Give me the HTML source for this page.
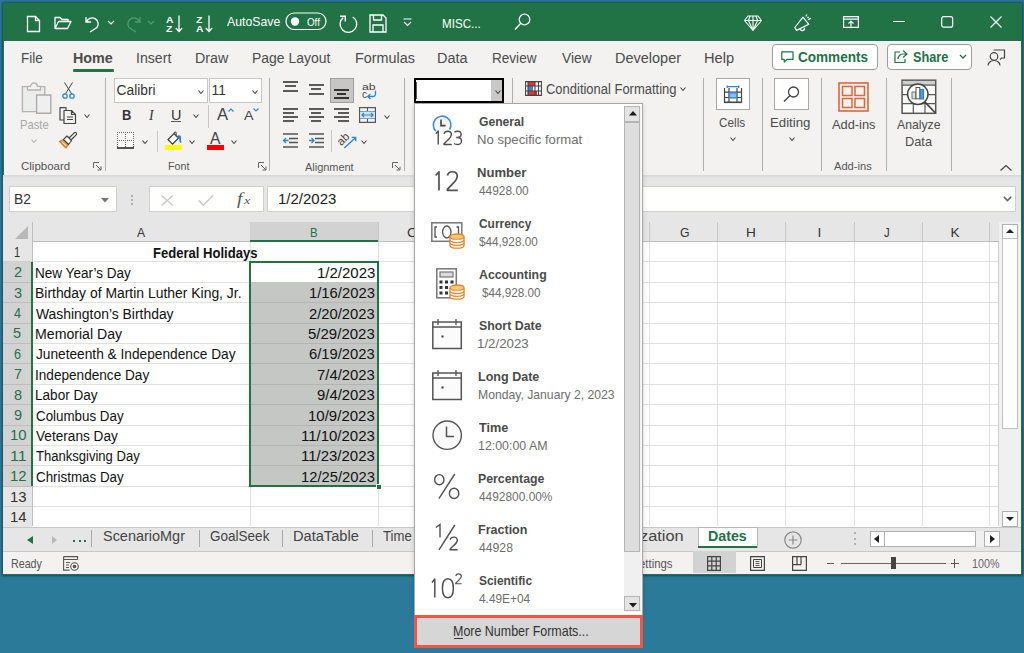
<!DOCTYPE html><html><head><meta charset="utf-8"><style>
html,body{margin:0;padding:0;width:1024px;height:653px;overflow:hidden;background:#2c7a99;}
.t{position:absolute;white-space:nowrap;line-height:1;transform-origin:0 0;}
svg{overflow:visible}
</style></head><body>
<div style="position:absolute;left:3px;top:3px;width:1018.5px;height:571.5px;background:#217346;box-shadow:0 0 2px 1px rgba(18,55,75,0.75)"></div>
<div style="position:absolute;left:3px;top:3px;width:1018px;height:38px;background:#217346;"></div>
<div style="position:absolute;left:4px;top:41px;width:1016.5px;height:134px;background:#f3f2f1;"></div>
<div style="position:absolute;left:4px;top:41px;width:1016.5px;height:1px;background:#fdfdfd;"></div>
<div style="position:absolute;left:4px;top:41px;width:1px;height:134px;background:#fdfdfd;"></div>
<div style="position:absolute;left:3px;top:175px;width:1017.5px;height:47px;background:#e6e6e6;"></div>
<div style="position:absolute;left:3px;top:175px;width:1017.5px;height:3px;background:linear-gradient(#d6d6d6,#e6e6e6);"></div>
<svg style="position:absolute;left:26px;top:15px;" width="15" height="18" viewBox="0 0 15 18"><path d="M1.5 1.5h8l4 4v11h-12z M9.5 1.5v4h4" fill="none" stroke="#fff" stroke-width="1.3"/></svg>
<svg style="position:absolute;left:54px;top:16px;" width="18" height="14" viewBox="0 0 18 14"><path d="M1 12.5V1.5h5l2 2h6v2.5 M1 12.5l3.5-7h12.5l-3.5 7z" fill="none" stroke="#fff" stroke-width="1.3" stroke-linejoin="round"/></svg>
<svg style="position:absolute;left:84px;top:15px;" width="17" height="18" viewBox="0 0 17 18"><path d="M2 2v5h5 M2.5 7 A6 6 0 1 1 13 12.5 L6 17" fill="none" stroke="#fff" stroke-width="1.3"/></svg>
<svg style="position:absolute;left:107px;top:20px;" width="8" height="5" viewBox="0 0 8 5"><path d="M1 1l3 3l3-3" fill="none" stroke="#fff" stroke-width="1.2"/></svg>
<svg style="position:absolute;left:126px;top:15px;" width="16" height="18" viewBox="0 0 16 18"><path d="M14 2v5h-5 M13.5 7 A6 6 0 1 0 3 12.5 L10 17" fill="none" stroke="#4f9a6f" stroke-width="1.3"/></svg>
<svg style="position:absolute;left:147px;top:20px;" width="8" height="5" viewBox="0 0 8 5"><path d="M1 1l3 3l3-3" fill="none" stroke="#4f9a6f" stroke-width="1.2"/></svg>
<div class="t" style="left:165.70px;top:16px;font-size:8.99px;font-weight:bold;font-style:normal;font-family:'Liberation Sans',sans-serif;color:#ffffff;transform:scaleX(1.1500);">A</div>
<div class="t" style="left:165.70px;top:25px;font-size:8.99px;font-weight:bold;font-style:normal;font-family:'Liberation Sans',sans-serif;color:#ffffff;transform:scaleX(1.1500);">Z</div>
<svg style="position:absolute;left:175px;top:15px;" width="8" height="18" viewBox="0 0 8 18"><path d="M4 0.5v16 M0.8 13l3.2 3.5l3.2-3.5" fill="none" stroke="#fff" stroke-width="1.3"/></svg>
<div class="t" style="left:195.80px;top:16px;font-size:8.99px;font-weight:bold;font-style:normal;font-family:'Liberation Sans',sans-serif;color:#ffffff;transform:scaleX(1.1500);">Z</div>
<div class="t" style="left:195.80px;top:25px;font-size:8.99px;font-weight:bold;font-style:normal;font-family:'Liberation Sans',sans-serif;color:#ffffff;transform:scaleX(1.1500);">A</div>
<svg style="position:absolute;left:205px;top:15px;" width="8" height="18" viewBox="0 0 8 18"><path d="M4 0.5v16 M0.8 13l3.2 3.5l3.2-3.5" fill="none" stroke="#fff" stroke-width="1.3"/></svg>
<div class="t" style="left:226.60px;top:17px;font-size:11.88px;font-weight:normal;font-style:normal;font-family:'Liberation Sans',sans-serif;color:#ffffff;transform:scaleX(1.0333);">AutoSave</div>
<svg style="position:absolute;left:285px;top:12px;" width="42" height="18" viewBox="0 0 42 18"><rect x="1" y="1" width="40" height="16.5" rx="8.25" fill="none" stroke="#fff" stroke-width="1.2"/><circle cx="10" cy="9.5" r="4.2" fill="#fff"/></svg>
<div class="t" style="left:306.70px;top:18px;font-size:10.29px;font-weight:normal;font-style:normal;font-family:'Liberation Sans',sans-serif;color:#ffffff;transform:scaleX(0.9500);">Off</div>
<svg style="position:absolute;left:335px;top:10px;" width="27" height="27" viewBox="0 0 27 27"><path d="M17.8 7A8.3 8.3 0 1 1 8.2 7.6 M5 6.2H10.3V11.6" fill="none" stroke="#fff" stroke-width="1.4"/></svg>
<svg style="position:absolute;left:369px;top:14px;" width="18" height="19" viewBox="0 0 18 19"><path d="M1 1h13l3 3v14h-16z M4.5 1v5h8v-5 M4 18v-7h10v7" fill="none" stroke="#fff" stroke-width="1.3"/></svg>
<svg style="position:absolute;left:403px;top:18px;" width="9" height="9" viewBox="0 0 9 9"><path d="M0.5 1h8 M1 4l3.5 3.5l3.5-3.5" fill="none" stroke="#fff" stroke-width="1.2"/></svg>
<div class="t" style="left:442.10px;top:18px;font-size:12.90px;font-weight:normal;font-style:normal;font-family:'Liberation Sans',sans-serif;color:#ffffff;transform:scaleX(0.9024);">MISC...</div>
<svg style="position:absolute;left:514px;top:13px;" width="17" height="18" viewBox="0 0 17 18"><circle cx="10.5" cy="6.5" r="5.3" fill="none" stroke="#fff" stroke-width="1.3"/><path d="M6.8 10.3L1 16.5" stroke="#fff" stroke-width="1.4"/></svg>
<svg style="position:absolute;left:744px;top:15px;" width="18" height="16" viewBox="0 0 18 16"><path d="M4 1h10l3.5 4.5l-8.5 10l-8.5-10z M0.5 5.5h17 M6 1l-1.5 4.5l4.5 10l4.5-10l-1.5-4.5 M9 1v14.5" fill="none" stroke="#fff" stroke-width="1.1" stroke-linejoin="round"/></svg>
<svg style="position:absolute;left:794px;top:14px;" width="18" height="18" viewBox="0 0 18 18"><path d="M0.8 13.5L9 3.2L14.8 10.3L2.6 16.4Z M6.2 15.2a2.3 2.3 0 0 0 4.3 -1.6 M11.8 2.6L12.9 0.4 M14.3 5.6L16.8 4.3 M13.4 4l1.2-1.2" fill="none" stroke="#fff" stroke-width="1.2" stroke-linejoin="round"/></svg>
<svg style="position:absolute;left:843px;top:16px;" width="16" height="12" viewBox="0 0 16 12"><path d="M0.6 0.6h14.8v10.8h-14.8z M0.6 3.2h14.8 M8 10.5v-5 M5.5 7.5l2.5-2.5l2.5 2.5" fill="none" stroke="#fff" stroke-width="1.2"/></svg>
<div style="position:absolute;left:893px;top:21px;width:12px;height:1.3000000000000007px;background:#fff;"></div>
<svg style="position:absolute;left:941px;top:16px;" width="13" height="12" viewBox="0 0 13 12"><rect x="0.7" y="0.7" width="11" height="10.5" rx="2" fill="none" stroke="#fff" stroke-width="1.2"/></svg>
<svg style="position:absolute;left:990px;top:16px;" width="12" height="12" viewBox="0 0 12 12"><path d="M0.5 0.5l11 11 M11.5 0.5l-11 11" stroke="#fff" stroke-width="1.2"/></svg>
<div class="t" style="left:20.77px;top:51px;font-size:14.49px;font-weight:normal;font-style:normal;font-family:'Liberation Sans',sans-serif;color:#4c4c4c;transform:scaleX(0.9318);">File</div>
<div class="t" style="left:73.01px;top:51px;font-size:14.49px;font-weight:bold;font-style:normal;font-family:'Liberation Sans',sans-serif;color:#4c4c4c;transform:scaleX(0.9872);">Home</div>
<div class="t" style="left:135.53px;top:51px;font-size:14.49px;font-weight:normal;font-style:normal;font-family:'Liberation Sans',sans-serif;color:#4c4c4c;transform:scaleX(0.9750);">Insert</div>
<div class="t" style="left:195.02px;top:51px;font-size:14.49px;font-weight:normal;font-style:normal;font-family:'Liberation Sans',sans-serif;color:#4c4c4c;transform:scaleX(0.9848);">Draw</div>
<div class="t" style="left:252.44px;top:51px;font-size:14.49px;font-weight:normal;font-style:normal;font-family:'Liberation Sans',sans-serif;color:#4c4c4c;transform:scaleX(0.9642);">Page Layout</div>
<div class="t" style="left:355.01px;top:51px;font-size:14.49px;font-weight:normal;font-style:normal;font-family:'Liberation Sans',sans-serif;color:#4c4c4c;transform:scaleX(0.9915);">Formulas</div>
<div class="t" style="left:437.00px;top:51px;font-size:14.49px;font-weight:normal;font-style:normal;font-family:'Liberation Sans',sans-serif;color:#4c4c4c;">Data</div>
<div class="t" style="left:492.06px;top:51px;font-size:14.49px;font-weight:normal;font-style:normal;font-family:'Liberation Sans',sans-serif;color:#4c4c4c;transform:scaleX(0.9362);">Review</div>
<div class="t" style="left:561.50px;top:51px;font-size:14.49px;font-weight:normal;font-style:normal;font-family:'Liberation Sans',sans-serif;color:#4c4c4c;transform:scaleX(0.9531);">View</div>
<div class="t" style="left:615.00px;top:51px;font-size:14.49px;font-weight:normal;font-style:normal;font-family:'Liberation Sans',sans-serif;color:#4c4c4c;">Developer</div>
<div class="t" style="left:703.99px;top:51px;font-size:14.49px;font-weight:normal;font-style:normal;font-family:'Liberation Sans',sans-serif;color:#4c4c4c;transform:scaleX(1.0103);">Help</div>
<div style="position:absolute;left:73px;top:69px;width:41px;height:3px;background:#217346;border-radius:1px"></div>
<div style="position:absolute;left:772px;top:44px;width:106px;height:26px;background:#fff;border:1px solid #9c9c9c;border-radius:4px;box-sizing:border-box"></div>
<svg style="position:absolute;left:780.5px;top:50.5px;" width="13" height="12" viewBox="0 0 13 12"><path d="M0.8 0.8h11.2v7.6h-6l-2.8 2.8v-2.8h-2.4z" fill="none" stroke="#217346" stroke-width="1.2" stroke-linejoin="round"/></svg>
<div class="t" style="left:797.80px;top:49px;font-size:15.07px;font-weight:bold;font-style:normal;font-family:'Liberation Sans',sans-serif;color:#217346;transform:scaleX(0.9000);">Comments</div>
<div style="position:absolute;left:887px;top:44px;width:85px;height:26px;background:#fff;border:1px solid #9c9c9c;border-radius:4px;box-sizing:border-box"></div>
<svg style="position:absolute;left:894px;top:49px;" width="14" height="15" viewBox="0 0 14 15"><path d="M9 1.5l4 3.5l-4 3.5 M13 5h-4a5 5 0 0 0-5 5 M6 3H1v10.5h10V10" fill="none" stroke="#217346" stroke-width="1.2" stroke-linejoin="round"/></svg>
<div class="t" style="left:912.50px;top:49px;font-size:15.07px;font-weight:bold;font-style:normal;font-family:'Liberation Sans',sans-serif;color:#217346;transform:scaleX(0.8452);">Share</div>
<svg style="position:absolute;left:959px;top:54px;" width="8" height="5" viewBox="0 0 8 5"><path d="M1 1l3 3l3-3" fill="none" stroke="#217346" stroke-width="1.3"/></svg>
<svg style="position:absolute;left:987px;top:49px;" width="18" height="17" viewBox="0 0 18 17"><circle cx="7" cy="7.5" r="3.8" fill="none" stroke="#444" stroke-width="1.2"/><path d="M1 16.5a6 5 0 0 1 12 0 M6.5 1h11v8h-3l-1.5 1.7" fill="none" stroke="#444" stroke-width="1.2"/></svg>
<svg style="position:absolute;left:16px;top:76px;" width="40" height="40" viewBox="0 0 40 40"><path d="M6.4 10.6h22.4v25h-22.4z" fill="#ececec" stroke="#b4b4b4" stroke-width="1.4"/><path d="M11.5 10.3v3.7h13v-3.7h-3.2a3.3 3.3 0 0 0 -6.6 0z" fill="#f2f2f2" stroke="#b4b4b4" stroke-width="1.3" stroke-linejoin="round"/><path d="M20.6 19h14.2v18.3h-14.2z" fill="#efefef" stroke="#acacac" stroke-width="1.4"/></svg>
<div class="t" style="left:19.54px;top:118px;font-size:13.04px;font-weight:normal;font-style:normal;font-family:'Liberation Sans',sans-serif;color:#a8a8a8;transform:scaleX(0.8625);">Paste</div>
<svg style="position:absolute;left:31px;top:139px;" width="6" height="4" viewBox="0 0 6 4"><path d="M0.5 0.5l2.5 3l2.5 -3" fill="none" stroke="#b0b0b0" stroke-width="1.1"/></svg>
<svg style="position:absolute;left:62px;top:82px;" width="13" height="17" viewBox="0 0 13 17"><path d="M2.5 0.5l7.5 12 M10.5 0.5l-7.5 12" stroke="#444" stroke-width="1"/><circle cx="3" cy="14" r="2.2" fill="none" stroke="#2b88d8" stroke-width="1.3"/><circle cx="10" cy="14" r="2.2" fill="none" stroke="#2b88d8" stroke-width="1.3"/></svg>
<svg style="position:absolute;left:59px;top:107px;" width="18" height="17" viewBox="0 0 18 17"><path d="M7 3.5V0.7H1v12.3h4 M5 3.5h7.5l4 4v9h-11.5z M12.5 3.5v4h4 M8 10h6 M8 12.5h6" fill="none" stroke="#444" stroke-width="1.2" stroke-linejoin="round"/></svg>
<svg style="position:absolute;left:84px;top:114px;" width="6" height="4" viewBox="0 0 6 4"><path d="M0.5 0.5l2.5 3l2.5 -3" fill="none" stroke="#444" stroke-width="1.1"/></svg>
<svg style="position:absolute;left:58px;top:131px;" width="20" height="18" viewBox="0 0 20 18"><path d="M5.5 8.5L1.5 10.5L8 17L10.5 13.5z" fill="#f5a54e" stroke="#e07a1f" stroke-width="1.2" stroke-linejoin="round"/><path d="M4.5 11.5l3.5 3" stroke="#fff" stroke-width="1"/><path d="M5.5 8.5L9 5L13.5 9.5L10.5 13.5z" fill="#fff" stroke="#444" stroke-width="1.2" stroke-linejoin="round"/><path d="M11 7L16.2 1.8a1.4 1.4 0 0 1 2 2L13 9" fill="none" stroke="#444" stroke-width="1.2"/></svg>
<div class="t" style="left:21.00px;top:161px;font-size:11.16px;font-weight:normal;font-style:normal;font-family:'Liberation Sans',sans-serif;color:#555555;transform:scaleX(1.0298);">Clipboard</div>
<svg style="position:absolute;left:93px;top:162px;" width="9" height="9" viewBox="0 0 9 9"><path d="M0.5 6V0.5h5.5 M3 3l5 5 M4.5 8h3.5v-3.5" fill="none" stroke="#666" stroke-width="1"/></svg>
<div style="position:absolute;left:105px;top:78px;width:1px;height:93px;background:#b1afad;"></div>
<div style="position:absolute;left:114px;top:78px;width:94px;height:25px;background:#fff;border:1px solid #c8c6c4;box-sizing:border-box"></div>
<div class="t" style="left:116.60px;top:84px;font-size:13.77px;font-weight:normal;font-style:normal;font-family:'Liberation Sans',sans-serif;color:#333;">Calibri</div>
<svg style="position:absolute;left:198px;top:90px;" width="6" height="4" viewBox="0 0 6 4"><path d="M0.5 0.5l2.5 3l2.5 -3" fill="none" stroke="#444" stroke-width="1.1"/></svg>
<div style="position:absolute;left:209px;top:78px;width:53px;height:25px;background:#fff;border:1px solid #c8c6c4;box-sizing:border-box"></div>
<div class="t" style="left:211.60px;top:84px;font-size:13.77px;font-weight:normal;font-style:normal;font-family:'Liberation Sans',sans-serif;color:#333;">11</div>
<svg style="position:absolute;left:252px;top:90px;" width="6" height="4" viewBox="0 0 6 4"><path d="M0.5 0.5l2.5 3l2.5 -3" fill="none" stroke="#444" stroke-width="1.1"/></svg>
<div class="t" style="left:121.53px;top:108px;font-size:14.93px;font-weight:bold;font-style:normal;font-family:'Liberation Sans',sans-serif;color:#333;transform:scaleX(0.8667);">B</div>
<div class="t" style="left:148.50px;top:108px;font-size:14.93px;font-weight:normal;font-style:italic;font-family:'Liberation Serif',serif;color:#333;transform:scaleX(0.9167);">I</div>
<div class="t" style="left:170.83px;top:108px;font-size:14.93px;font-weight:normal;font-style:normal;font-family:'Liberation Sans',sans-serif;color:#333;transform:scaleX(0.9667);">U</div>
<div style="position:absolute;left:171.4px;top:121px;width:9.599999999999994px;height:1.2000000000000028px;background:#555;"></div>
<svg style="position:absolute;left:193px;top:114px;" width="6" height="4" viewBox="0 0 6 4"><path d="M0.5 0.5l2.5 3l2.5 -3" fill="none" stroke="#444" stroke-width="1.1"/></svg>
<div style="position:absolute;left:208px;top:105px;width:1px;height:23px;background:#c8c6c4;"></div>
<div class="t" style="left:217.00px;top:107px;font-size:15.65px;font-weight:normal;font-style:normal;font-family:'Liberation Sans',sans-serif;color:#444;transform:scaleX(1.0636);">A</div>
<svg style="position:absolute;left:228px;top:108px;" width="6" height="4" viewBox="0 0 6 4"><path d="M0.5 3.5l2.5-2.5l2.5 2.5" fill="none" stroke="#2b88d8" stroke-width="1.2"/></svg>
<div class="t" style="left:244.00px;top:110px;font-size:12.32px;font-weight:normal;font-style:normal;font-family:'Liberation Sans',sans-serif;color:#444;transform:scaleX(1.1625);">A</div>
<svg style="position:absolute;left:253px;top:108px;" width="6" height="4" viewBox="0 0 6 4"><path d="M0.5 0.5l2.5 2.5l2.5-2.5" fill="none" stroke="#2b88d8" stroke-width="1.2"/></svg>
<svg style="position:absolute;left:117px;top:132px;" width="17" height="17" viewBox="0 0 17 17"><rect x="0.5" y="0.5" width="16" height="16" fill="#fbfbfb"/><path d="M0.5 0V15 M16.5 0V15 M0 0.5H17 M8.5 0V15 M0 8.5H17" fill="none" stroke="#6a6a6a" stroke-width="1" stroke-dasharray="1 1"/><rect x="0" y="15" width="17" height="2" fill="#555"/></svg>
<svg style="position:absolute;left:142px;top:140px;" width="6" height="4" viewBox="0 0 6 4"><path d="M0.5 0.5l2.5 3l2.5 -3" fill="none" stroke="#444" stroke-width="1.1"/></svg>
<div style="position:absolute;left:157px;top:131px;width:1px;height:21px;background:#c8c6c4;"></div>
<svg style="position:absolute;left:166px;top:131px;" width="17" height="14" viewBox="0 0 17 14"><path d="M2 8.6L8 2.6L12.5 7.1L6.5 13.1Z" fill="#fff" stroke="#333" stroke-width="1.3" stroke-linejoin="round"/><path d="M8 2.6Q8.6 0.6 10 1.4L10.4 5.6" fill="none" stroke="#555" stroke-width="1.2"/><path d="M11.8 6.3Q12.8 4.3 13.9 5.4L14.4 11" fill="none" stroke="#2b78c8" stroke-width="1.7" stroke-linecap="round"/></svg>
<div style="position:absolute;left:165px;top:145px;width:17px;height:4.5px;background:#ffff00;"></div>
<svg style="position:absolute;left:189px;top:140px;" width="6" height="4" viewBox="0 0 6 4"><path d="M0.5 0.5l2.5 3l2.5 -3" fill="none" stroke="#444" stroke-width="1.1"/></svg>
<div class="t" style="left:210.00px;top:131px;font-size:16.52px;font-weight:normal;font-style:normal;font-family:'Liberation Sans',sans-serif;color:#444;transform:scaleX(0.9455);">A</div>
<div style="position:absolute;left:206.7px;top:145px;width:17.100000000000023px;height:4.5px;background:#ff0000;"></div>
<svg style="position:absolute;left:231px;top:140px;" width="6" height="4" viewBox="0 0 6 4"><path d="M0.5 0.5l2.5 3l2.5 -3" fill="none" stroke="#444" stroke-width="1.1"/></svg>
<div class="t" style="left:168.01px;top:161px;font-size:10.87px;font-weight:normal;font-style:normal;font-family:'Liberation Sans',sans-serif;color:#555555;transform:scaleX(0.9857);">Font</div>
<svg style="position:absolute;left:258px;top:162px;" width="9" height="9" viewBox="0 0 9 9"><path d="M0.5 6V0.5h5.5 M3 3l5 5 M4.5 8h3.5v-3.5" fill="none" stroke="#666" stroke-width="1"/></svg>
<div style="position:absolute;left:269px;top:78px;width:1px;height:93px;background:#b1afad;"></div>
<div style="position:absolute;left:283px;top:81px;width:15px;height:1.5px;background:#5a5a5a;"></div>
<div style="position:absolute;left:285.3px;top:85px;width:10.699999999999989px;height:1.5px;background:#5a5a5a;"></div>
<div style="position:absolute;left:283px;top:90px;width:15px;height:1.5px;background:#5a5a5a;"></div>
<div style="position:absolute;left:308.6px;top:84px;width:15.199999999999989px;height:1.5px;background:#5a5a5a;"></div>
<div style="position:absolute;left:310.8px;top:88px;width:10.699999999999989px;height:1.5px;background:#5a5a5a;"></div>
<div style="position:absolute;left:308.6px;top:93px;width:15.199999999999989px;height:1.5px;background:#5a5a5a;"></div>
<div style="position:absolute;left:330px;top:78px;width:24px;height:25px;background:#c8c6c4;border:1px solid #a19f9d;box-sizing:border-box"></div>
<div style="position:absolute;left:334px;top:89px;width:15px;height:1.5px;background:#333;"></div>
<div style="position:absolute;left:337px;top:93px;width:9px;height:1.5px;background:#333;"></div>
<div style="position:absolute;left:334px;top:97px;width:15px;height:1.5px;background:#333;"></div>
<div class="t" style="left:362.00px;top:82px;font-size:9.42px;font-weight:normal;font-style:normal;font-family:'Liberation Sans',sans-serif;color:#444;transform:scaleX(1.3000);">ab</div>
<div class="t" style="left:362.00px;top:90px;font-size:10.14px;font-weight:normal;font-style:normal;font-family:'Liberation Sans',sans-serif;color:#444;">c</div>
<svg style="position:absolute;left:367px;top:90px;" width="10" height="9" viewBox="0 0 10 9"><path d="M8.5 0.5v3.5a2.5 2.5 0 0 1-2.5 2.5h-5 M3.5 4l-2.8 2.5l2.8 2.5" fill="none" stroke="#2b88d8" stroke-width="1.3"/></svg>
<div style="position:absolute;left:283px;top:108px;width:15px;height:1.5px;background:#5a5a5a;"></div>
<div style="position:absolute;left:283px;top:112px;width:11px;height:1.5px;background:#5a5a5a;"></div>
<div style="position:absolute;left:283px;top:116px;width:15px;height:1.5px;background:#5a5a5a;"></div>
<div style="position:absolute;left:283px;top:120px;width:11px;height:1.5px;background:#5a5a5a;"></div>
<div style="position:absolute;left:308.6px;top:108px;width:15.199999999999989px;height:1.5px;background:#5a5a5a;"></div>
<div style="position:absolute;left:310.8px;top:112px;width:10.699999999999989px;height:1.5px;background:#5a5a5a;"></div>
<div style="position:absolute;left:308.6px;top:116px;width:15.199999999999989px;height:1.5px;background:#5a5a5a;"></div>
<div style="position:absolute;left:310.8px;top:120px;width:10.699999999999989px;height:1.5px;background:#5a5a5a;"></div>
<div style="position:absolute;left:334px;top:108px;width:15px;height:1.5px;background:#5a5a5a;"></div>
<div style="position:absolute;left:338px;top:112px;width:11px;height:1.5px;background:#5a5a5a;"></div>
<div style="position:absolute;left:334px;top:116px;width:15px;height:1.5px;background:#5a5a5a;"></div>
<div style="position:absolute;left:338px;top:120px;width:11px;height:1.5px;background:#5a5a5a;"></div>
<svg style="position:absolute;left:359px;top:107px;" width="17" height="16" viewBox="0 0 17 16"><rect x="0.6" y="0.6" width="15.8" height="14.8" fill="none" stroke="#555" stroke-width="1.2"/><path d="M0.6 4.5h15.8 M0.6 11.5h15.8 M8.5 0.6v3.9 M8.5 11.5v3.9" stroke="#555" stroke-width="1.1"/><rect x="1.2" y="4.5" width="14.6" height="7" fill="#cde6f7"/><path d="M3 8h11 M5 6l-2 2l2 2 M12 6l2 2l-2 2" fill="none" stroke="#2b88d8" stroke-width="1.2"/></svg>
<svg style="position:absolute;left:384px;top:115px;" width="6" height="4" viewBox="0 0 6 4"><path d="M0.5 0.5l2.5 3l2.5 -3" fill="none" stroke="#444" stroke-width="1.1"/></svg>
<svg style="position:absolute;left:283px;top:133px;" width="16" height="15" viewBox="0 0 16 15"><path d="M0 1h15 M6 5.5h9 M6 9.5h9 M0 14h15" stroke="#555" stroke-width="1.4"/><path d="M0.5 7.5h5 M3 5l-2.5 2.5l2.5 2.5" fill="none" stroke="#2b88d8" stroke-width="1.3"/></svg>
<svg style="position:absolute;left:308.6px;top:133px;" width="16" height="15" viewBox="0 0 16 15"><path d="M0 1h15 M6 5.5h9 M6 9.5h9 M0 14h15" stroke="#555" stroke-width="1.4"/><path d="M0 7.5h5 M2.5 5l2.5 2.5l-2.5 2.5" fill="none" stroke="#2b88d8" stroke-width="1.3"/></svg>
<div style="position:absolute;left:331px;top:130px;width:1px;height:22px;background:#c8c6c4;"></div>
<svg style="position:absolute;left:334px;top:128px;" width="30" height="24" viewBox="0 0 30 24"><text x="0" y="0" font-family="Liberation Sans" font-size="11.5" fill="#444" transform="translate(7.2,18.2) rotate(-45)">ab</text><path d="M10.3 19.9L21.7 9.4 M17.6 9.4H21.7V13.2" fill="none" stroke="#2b88d8" stroke-width="1.4"/></svg>
<svg style="position:absolute;left:361px;top:140px;" width="6" height="4" viewBox="0 0 6 4"><path d="M0.5 0.5l2.5 3l2.5 -3" fill="none" stroke="#444" stroke-width="1.1"/></svg>
<div class="t" style="left:304.50px;top:162px;font-size:11.16px;font-weight:normal;font-style:normal;font-family:'Liberation Sans',sans-serif;color:#555555;transform:scaleX(0.9800);">Alignment</div>
<svg style="position:absolute;left:392px;top:162px;" width="9" height="9" viewBox="0 0 9 9"><path d="M0.5 6V0.5h5.5 M3 3l5 5 M4.5 8h3.5v-3.5" fill="none" stroke="#666" stroke-width="1"/></svg>
<div style="position:absolute;left:404px;top:78px;width:1px;height:93px;background:#b1afad;"></div>
<div style="position:absolute;left:413.6px;top:78.2px;width:90.69999999999999px;height:24.599999999999994px;background:#fff;border:2px solid #000;box-sizing:border-box"></div>
<div style="position:absolute;left:490.5px;top:80.2px;width:11.800000000000011px;height:20.599999999999994px;background:#c8c8c8;"></div>
<svg style="position:absolute;left:494.5px;top:89.5px;" width="6" height="4" viewBox="0 0 6 4"><path d="M0.5 0.5l2.5 3l2.5 -3" fill="none" stroke="#444" stroke-width="1.1"/></svg>
<div style="position:absolute;left:416px;top:82px;width:1.3000000000000114px;height:16.5px;background:#555;"></div>
<div style="position:absolute;left:512px;top:78px;width:1px;height:93px;background:#b1afad;"></div>
<svg style="position:absolute;left:525px;top:81px;" width="17" height="15" viewBox="0 0 17 15"><rect x="0.6" y="0.6" width="15.8" height="13.8" fill="#fff"/><rect x="3" y="0.6" width="7" height="4.4" fill="#e8322b"/><rect x="3" y="10" width="9" height="4.4" fill="#e8322b"/><rect x="3" y="5" width="5" height="5" fill="#2b88d8"/><path d="M0.6 0.6h15.8v13.8h-15.8z M3 0.6v13.8 M10 0.6v13.8 M13.5 0.6v13.8 M0.6 5h15.8 M0.6 10h15.8" fill="none" stroke="#444" stroke-width="1.1"/></svg>
<div class="t" style="left:545.60px;top:82px;font-size:14.93px;font-weight:normal;font-style:normal;font-family:'Liberation Sans',sans-serif;color:#4c4c4c;transform:scaleX(0.8691);">Conditional Formatting</div>
<svg style="position:absolute;left:680px;top:87px;" width="6" height="4" viewBox="0 0 6 4"><path d="M0.5 0.5l2.5 3l2.5 -3" fill="none" stroke="#444" stroke-width="1.1"/></svg>
<div style="position:absolute;left:703px;top:78px;width:1px;height:93px;background:#b1afad;"></div>
<div style="position:absolute;left:716px;top:78.2px;width:34px;height:32.3px;background:#fff;border:1px solid #a8a8a8;box-sizing:border-box"></div>
<svg style="position:absolute;left:723px;top:84px;" width="20" height="20" viewBox="0 0 20 20"><path d="M1.5 4V18.5 M6 4V18.5 M14 4V18.5 M18.5 4V18.5 M1.5 8.2H18.5 M1.5 13.5H18.5" stroke="#444" stroke-width="1.2"/><path d="M1 18.3H19" stroke="#444" stroke-width="1.6"/><rect x="5.8" y="8" width="8.4" height="6.6" fill="#3b8edb"/><rect x="7.2" y="9.6" width="5.6" height="3.4" fill="#8fc0ec"/><path d="M4.2 2.7H15.7 M4.2 1.4V4 M15.7 1.4V4" stroke="#2b88d8" stroke-width="1.3"/></svg>
<div class="t" style="left:719.00px;top:117px;font-size:12.90px;font-weight:normal;font-style:normal;font-family:'Liberation Sans',sans-serif;color:#4c4c4c;transform:scaleX(0.9138);">Cells</div>
<svg style="position:absolute;left:729.5px;top:137px;" width="6" height="4" viewBox="0 0 6 4"><path d="M0.5 0.5l2.5 3l2.5 -3" fill="none" stroke="#444" stroke-width="1.1"/></svg>
<div style="position:absolute;left:762px;top:78px;width:1px;height:93px;background:#b1afad;"></div>
<div style="position:absolute;left:774px;top:78.2px;width:34.5px;height:32.3px;background:#fff;border:1px solid #a8a8a8;box-sizing:border-box"></div>
<svg style="position:absolute;left:783px;top:86px;" width="17" height="17" viewBox="0 0 17 17"><circle cx="10.5" cy="6" r="5" fill="none" stroke="#444" stroke-width="1.3"/><path d="M7 9.5l-6 6" stroke="#444" stroke-width="1.4"/></svg>
<div class="t" style="left:770.27px;top:117px;font-size:12.90px;font-weight:normal;font-style:normal;font-family:'Liberation Sans',sans-serif;color:#4c4c4c;transform:scaleX(1.0263);">Editing</div>
<svg style="position:absolute;left:789px;top:137px;" width="6" height="4" viewBox="0 0 6 4"><path d="M0.5 0.5l2.5 3l2.5 -3" fill="none" stroke="#444" stroke-width="1.1"/></svg>
<div style="position:absolute;left:821px;top:78px;width:1px;height:93px;background:#b1afad;"></div>
<svg style="position:absolute;left:838px;top:82px;" width="31" height="30" viewBox="0 0 31 30"><rect x="1" y="1" width="29" height="28" fill="none" stroke="#e0653a" stroke-width="1.6"/><rect x="4.5" y="4.5" width="9.5" height="9" fill="none" stroke="#e0653a" stroke-width="1.5"/><rect x="17" y="4.5" width="9.5" height="9" fill="none" stroke="#e0653a" stroke-width="1.5"/><rect x="4.5" y="16.5" width="9.5" height="9" fill="none" stroke="#e0653a" stroke-width="1.5"/><rect x="17" y="16.5" width="9.5" height="9" fill="none" stroke="#e0653a" stroke-width="1.5"/></svg>
<div class="t" style="left:832.00px;top:118px;font-size:13.62px;font-weight:normal;font-style:normal;font-family:'Liberation Sans',sans-serif;color:#4c4c4c;transform:scaleX(0.9435);">Add-ins</div>
<div class="t" style="left:834.30px;top:161px;font-size:11.45px;font-weight:normal;font-style:normal;font-family:'Liberation Sans',sans-serif;color:#555555;transform:scaleX(0.9718);">Add-ins</div>
<div style="position:absolute;left:886px;top:78px;width:1px;height:93px;background:#b1afad;"></div>
<svg style="position:absolute;left:901px;top:79px;" width="37" height="36" viewBox="0 0 37 36"><rect x="1.1" y="1.2" width="33.6" height="33.1" fill="#fff" stroke="#555" stroke-width="1.5"/><rect x="1.8" y="1.9" width="32.2" height="4.3" fill="#cfcfcf"/><path d="M1.1 6.2H34.7 M1.1 15.7H34.7 M1.1 24.7H34.7 M12.3 24.7V34.3 M24 24.7V34.3" stroke="#5a5a5a" stroke-width="1.2"/><circle cx="16.8" cy="15.3" r="10.2" fill="#fff" stroke="#444" stroke-width="1.5"/><path d="M23.8 22.8L34.5 34" stroke="#444" stroke-width="1.8"/><rect x="11" y="13" width="3.8" height="6.8" fill="#ddd" stroke="#777" stroke-width="1"/><rect x="15" y="8.5" width="3.8" height="11.3" fill="#fff" stroke="#555" stroke-width="1"/><rect x="19.1" y="10.4" width="3.5" height="9.6" fill="#4a9ae0" stroke="#2b78c8" stroke-width="1"/></svg>
<div class="t" style="left:897.30px;top:119px;font-size:12.46px;font-weight:normal;font-style:normal;font-family:'Liberation Sans',sans-serif;color:#4c4c4c;transform:scaleX(0.9818);">Analyze</div>
<div class="t" style="left:904.96px;top:136px;font-size:12.32px;font-weight:normal;font-style:normal;font-family:'Liberation Sans',sans-serif;color:#4c4c4c;transform:scaleX(1.0400);">Data</div>
<div style="position:absolute;left:951px;top:78px;width:1px;height:93px;background:#b1afad;"></div>
<svg style="position:absolute;left:1000px;top:165px;" width="12" height="6" viewBox="0 0 12 6"><path d="M0.5 5.5l5.5-5l5.5 5" fill="none" stroke="#444" stroke-width="1.2"/></svg>
<div style="position:absolute;left:9px;top:186px;width:108px;height:25.5px;background:#fffffe;border:1px solid #d0d0d0;box-sizing:border-box"></div>
<div class="t" style="left:13.59px;top:191px;font-size:15.22px;font-weight:normal;font-style:normal;font-family:'Liberation Sans',sans-serif;color:#333;transform:scaleX(0.9118);">B2</div>
<svg style="position:absolute;left:101px;top:198px;" width="8" height="5" viewBox="0 0 8 5"><path d="M0 0h8l-4 4.5z" fill="#777"/></svg>
<div style="position:absolute;left:131px;top:194.5px;width:2px;height:2.0px;background:#b0b0b0;"></div>
<div style="position:absolute;left:131px;top:198.5px;width:2px;height:2.0px;background:#b0b0b0;"></div>
<div style="position:absolute;left:131px;top:202.5px;width:2px;height:2.0px;background:#b0b0b0;"></div>
<div style="position:absolute;left:148.5px;top:186px;width:115.5px;height:25.5px;background:#fffffe;border:1px solid #d0d0d0;box-sizing:border-box"></div>
<svg style="position:absolute;left:161px;top:194.5px;" width="13" height="11" viewBox="0 0 13 11"><path d="M0.5 0.5l11.5 10 M12 0.5l-11.5 10" stroke="#c8c8c8" stroke-width="1.3"/></svg>
<svg style="position:absolute;left:198px;top:195px;" width="16" height="11" viewBox="0 0 16 11"><path d="M0.8 5.5l4.5 4.5l9.8-9.5" fill="none" stroke="#c8c8c8" stroke-width="1.5"/></svg>
<div class="t" style="left:236.50px;top:191px;font-size:15.94px;font-weight:normal;font-style:italic;font-family:'Liberation Serif',serif;color:#555;transform:scaleX(1.2143);">f</div>
<div class="t" style="left:243.50px;top:196px;font-size:10.14px;font-weight:normal;font-style:italic;font-family:'Liberation Serif',serif;color:#555;transform:scaleX(1.4000);">x</div>
<div style="position:absolute;left:266.5px;top:186px;width:749.0px;height:25.5px;background:#fffffe;border:1px solid #d0d0d0;box-sizing:border-box"></div>
<div class="t" style="left:278.02px;top:191px;font-size:15.36px;font-weight:normal;font-style:normal;font-family:'Liberation Sans',sans-serif;color:#222;transform:scaleX(0.9759);">1/2/2023</div>
<svg style="position:absolute;left:1002.5px;top:196px;" width="9" height="6" viewBox="0 0 9 6"><path d="M0.8 0.8l3.7 3.7l3.7-3.7" fill="none" stroke="#666" stroke-width="1.6"/></svg>
<div style="position:absolute;left:3px;top:222px;width:1017.5px;height:305px;background:#fff;"></div>
<div style="position:absolute;left:3px;top:222px;width:1017.5px;height:19.5px;background:#e6e6e6;"></div>
<div style="position:absolute;left:3px;top:222px;width:29px;height:305px;background:#e6e6e6;"></div>
<svg style="position:absolute;left:15px;top:226px;" width="14" height="13" viewBox="0 0 14 13"><path d="M13 0v13h-13z" fill="#b8b8b8"/></svg>
<div style="position:absolute;left:32px;top:261.34999999999997px;width:966.5px;height:1.0px;background:#e1e1e1;"></div>
<div style="position:absolute;left:3px;top:261.34999999999997px;width:29px;height:1.0px;background:#cfcfcf;"></div>
<div style="position:absolute;left:32px;top:281.75px;width:966.5px;height:1.0px;background:#e1e1e1;"></div>
<div style="position:absolute;left:3px;top:281.75px;width:29px;height:1.0px;background:#cfcfcf;"></div>
<div style="position:absolute;left:32px;top:302.15px;width:966.5px;height:1.0px;background:#e1e1e1;"></div>
<div style="position:absolute;left:3px;top:302.15px;width:29px;height:1.0px;background:#cfcfcf;"></div>
<div style="position:absolute;left:32px;top:322.54999999999995px;width:966.5px;height:1.0px;background:#e1e1e1;"></div>
<div style="position:absolute;left:3px;top:322.54999999999995px;width:29px;height:1.0px;background:#cfcfcf;"></div>
<div style="position:absolute;left:32px;top:342.95px;width:966.5px;height:1.0px;background:#e1e1e1;"></div>
<div style="position:absolute;left:3px;top:342.95px;width:29px;height:1.0px;background:#cfcfcf;"></div>
<div style="position:absolute;left:32px;top:363.34999999999997px;width:966.5px;height:1.0px;background:#e1e1e1;"></div>
<div style="position:absolute;left:3px;top:363.34999999999997px;width:29px;height:1.0px;background:#cfcfcf;"></div>
<div style="position:absolute;left:32px;top:383.75px;width:966.5px;height:1.0px;background:#e1e1e1;"></div>
<div style="position:absolute;left:3px;top:383.75px;width:29px;height:1.0px;background:#cfcfcf;"></div>
<div style="position:absolute;left:32px;top:404.15px;width:966.5px;height:1.0px;background:#e1e1e1;"></div>
<div style="position:absolute;left:3px;top:404.15px;width:29px;height:1.0px;background:#cfcfcf;"></div>
<div style="position:absolute;left:32px;top:424.54999999999995px;width:966.5px;height:1.0px;background:#e1e1e1;"></div>
<div style="position:absolute;left:3px;top:424.54999999999995px;width:29px;height:1.0px;background:#cfcfcf;"></div>
<div style="position:absolute;left:32px;top:444.95px;width:966.5px;height:1.0px;background:#e1e1e1;"></div>
<div style="position:absolute;left:3px;top:444.95px;width:29px;height:1.0px;background:#cfcfcf;"></div>
<div style="position:absolute;left:32px;top:465.34999999999997px;width:966.5px;height:1.0px;background:#e1e1e1;"></div>
<div style="position:absolute;left:3px;top:465.34999999999997px;width:29px;height:1.0px;background:#cfcfcf;"></div>
<div style="position:absolute;left:32px;top:485.75px;width:966.5px;height:1.0px;background:#e1e1e1;"></div>
<div style="position:absolute;left:3px;top:485.75px;width:29px;height:1.0px;background:#cfcfcf;"></div>
<div style="position:absolute;left:32px;top:506.15px;width:966.5px;height:1.0px;background:#e1e1e1;"></div>
<div style="position:absolute;left:3px;top:506.15px;width:29px;height:1.0px;background:#cfcfcf;"></div>
<div style="position:absolute;left:32px;top:526.55px;width:966.5px;height:1.0px;background:#e1e1e1;"></div>
<div style="position:absolute;left:3px;top:526.55px;width:29px;height:1.0px;background:#cfcfcf;"></div>
<div style="position:absolute;left:249.5px;top:241.5px;width:1.0px;height:284.5px;background:#e1e1e1;"></div>
<div style="position:absolute;left:249.5px;top:222px;width:1.0px;height:19.5px;background:#c8c8c8;"></div>
<div style="position:absolute;left:377.5px;top:241.5px;width:1.0px;height:284.5px;background:#e1e1e1;"></div>
<div style="position:absolute;left:377.5px;top:222px;width:1.0px;height:19.5px;background:#c8c8c8;"></div>
<div style="position:absolute;left:445.5px;top:241.5px;width:1.0px;height:284.5px;background:#e1e1e1;"></div>
<div style="position:absolute;left:445.5px;top:222px;width:1.0px;height:19.5px;background:#c8c8c8;"></div>
<div style="position:absolute;left:513.5px;top:241.5px;width:1.0px;height:284.5px;background:#e1e1e1;"></div>
<div style="position:absolute;left:513.5px;top:222px;width:1.0px;height:19.5px;background:#c8c8c8;"></div>
<div style="position:absolute;left:580.5px;top:241.5px;width:1.0px;height:284.5px;background:#e1e1e1;"></div>
<div style="position:absolute;left:580.5px;top:222px;width:1.0px;height:19.5px;background:#c8c8c8;"></div>
<div style="position:absolute;left:648.5px;top:241.5px;width:1.0px;height:284.5px;background:#e1e1e1;"></div>
<div style="position:absolute;left:648.5px;top:222px;width:1.0px;height:19.5px;background:#c8c8c8;"></div>
<div style="position:absolute;left:717.0px;top:241.5px;width:1.0px;height:284.5px;background:#e1e1e1;"></div>
<div style="position:absolute;left:717.0px;top:222px;width:1.0px;height:19.5px;background:#c8c8c8;"></div>
<div style="position:absolute;left:785.0px;top:241.5px;width:1.0px;height:284.5px;background:#e1e1e1;"></div>
<div style="position:absolute;left:785.0px;top:222px;width:1.0px;height:19.5px;background:#c8c8c8;"></div>
<div style="position:absolute;left:853.5px;top:241.5px;width:1.0px;height:284.5px;background:#e1e1e1;"></div>
<div style="position:absolute;left:853.5px;top:222px;width:1.0px;height:19.5px;background:#c8c8c8;"></div>
<div style="position:absolute;left:921.5px;top:241.5px;width:1.0px;height:284.5px;background:#e1e1e1;"></div>
<div style="position:absolute;left:921.5px;top:222px;width:1.0px;height:19.5px;background:#c8c8c8;"></div>
<div style="position:absolute;left:988.5px;top:241.5px;width:1.0px;height:284.5px;background:#e1e1e1;"></div>
<div style="position:absolute;left:988.5px;top:222px;width:1.0px;height:19.5px;background:#c8c8c8;"></div>
<div style="position:absolute;left:32px;top:241px;width:966.5px;height:1px;background:#bdbdbd;"></div>
<div style="position:absolute;left:31.5px;top:222px;width:1.0px;height:304px;background:#bdbdbd;"></div>
<div style="position:absolute;left:998px;top:241.5px;width:1px;height:284.5px;background:#d0d0d0;"></div>
<div style="position:absolute;left:250px;top:222px;width:128px;height:19.5px;background:#d2d2d2;"></div>
<div style="position:absolute;left:250px;top:239.5px;width:128px;height:2.0px;background:#217346;"></div>
<div style="position:absolute;left:3px;top:261.84999999999997px;width:28.5px;height:224.40000000000003px;background:#d2d2d2;"></div>
<div style="position:absolute;left:3px;top:281.75px;width:28.5px;height:1.0px;background:#bdbdbd;"></div>
<div style="position:absolute;left:3px;top:302.15px;width:28.5px;height:1.0px;background:#bdbdbd;"></div>
<div style="position:absolute;left:3px;top:322.54999999999995px;width:28.5px;height:1.0px;background:#bdbdbd;"></div>
<div style="position:absolute;left:3px;top:342.95px;width:28.5px;height:1.0px;background:#bdbdbd;"></div>
<div style="position:absolute;left:3px;top:363.34999999999997px;width:28.5px;height:1.0px;background:#bdbdbd;"></div>
<div style="position:absolute;left:3px;top:383.75px;width:28.5px;height:1.0px;background:#bdbdbd;"></div>
<div style="position:absolute;left:3px;top:404.15px;width:28.5px;height:1.0px;background:#bdbdbd;"></div>
<div style="position:absolute;left:3px;top:424.54999999999995px;width:28.5px;height:1.0px;background:#bdbdbd;"></div>
<div style="position:absolute;left:3px;top:444.95px;width:28.5px;height:1.0px;background:#bdbdbd;"></div>
<div style="position:absolute;left:3px;top:465.34999999999997px;width:28.5px;height:1.0px;background:#bdbdbd;"></div>
<div style="position:absolute;left:3px;top:485.75px;width:28.5px;height:1.0px;background:#bdbdbd;"></div>
<div style="position:absolute;left:30.5px;top:261.84999999999997px;width:2.0px;height:224.40000000000003px;background:#217346;"></div>
<div style="position:absolute;left:250px;top:282.25px;width:127px;height:204.0px;background:#c5c7c5;"></div>
<div style="position:absolute;left:250px;top:302.15px;width:127px;height:1.0px;background:#b4b4b4;"></div>
<div style="position:absolute;left:250px;top:322.54999999999995px;width:127px;height:1.0px;background:#b4b4b4;"></div>
<div style="position:absolute;left:250px;top:342.95px;width:127px;height:1.0px;background:#b4b4b4;"></div>
<div style="position:absolute;left:250px;top:363.34999999999997px;width:127px;height:1.0px;background:#b4b4b4;"></div>
<div style="position:absolute;left:250px;top:383.75px;width:127px;height:1.0px;background:#b4b4b4;"></div>
<div style="position:absolute;left:250px;top:404.15px;width:127px;height:1.0px;background:#b4b4b4;"></div>
<div style="position:absolute;left:250px;top:424.54999999999995px;width:127px;height:1.0px;background:#b4b4b4;"></div>
<div style="position:absolute;left:250px;top:444.95px;width:127px;height:1.0px;background:#b4b4b4;"></div>
<div style="position:absolute;left:250px;top:465.34999999999997px;width:127px;height:1.0px;background:#b4b4b4;"></div>
<div style="position:absolute;left:249px;top:261.34999999999997px;width:130px;height:2.0px;background:#217346;"></div>
<div style="position:absolute;left:249px;top:485.25px;width:130px;height:2.0px;background:#217346;"></div>
<div style="position:absolute;left:249px;top:261.34999999999997px;width:2px;height:225.90000000000003px;background:#217346;"></div>
<div style="position:absolute;left:377px;top:261.34999999999997px;width:2px;height:225.90000000000003px;background:#217346;"></div>
<div style="position:absolute;left:376.5px;top:484.75px;width:4.0px;height:4.0px;background:#217346;border:1px solid #fff;box-sizing:content-box;margin:-1px"></div>
<div class="t" style="left:137.00px;top:226px;font-size:13.62px;font-weight:normal;font-style:normal;font-family:'Liberation Sans',sans-serif;color:#333;transform:scaleX(0.8889);">A</div>
<div class="t" style="left:310.46px;top:226px;font-size:13.62px;font-weight:normal;font-style:normal;font-family:'Liberation Sans',sans-serif;color:#217346;transform:scaleX(0.8375);">B</div>
<div class="t" style="left:407.00px;top:226px;font-size:13.62px;font-weight:normal;font-style:normal;font-family:'Liberation Sans',sans-serif;color:#333;">C</div>
<div class="t" style="left:680.00px;top:226px;font-size:13.62px;font-weight:normal;font-style:normal;font-family:'Liberation Sans',sans-serif;color:#333;transform:scaleX(0.9000);">G</div>
<div class="t" style="left:746.00px;top:226px;font-size:13.62px;font-weight:normal;font-style:normal;font-family:'Liberation Sans',sans-serif;color:#333;">H</div>
<div class="t" style="left:817.50px;top:226px;font-size:13.62px;font-weight:normal;font-style:normal;font-family:'Liberation Sans',sans-serif;color:#333;">I</div>
<div class="t" style="left:884.00px;top:226px;font-size:13.62px;font-weight:normal;font-style:normal;font-family:'Liberation Sans',sans-serif;color:#333;transform:scaleX(0.8333);">J</div>
<div class="t" style="left:950.50px;top:226px;font-size:13.62px;font-weight:normal;font-style:normal;font-family:'Liberation Sans',sans-serif;color:#333;">K</div>
<div class="t" style="left:14.20px;top:246px;font-size:13.91px;font-weight:normal;font-style:normal;font-family:'Liberation Sans',sans-serif;color:#333;transform:scaleX(0.8000);">1</div>
<div class="t" style="left:13.90px;top:266px;font-size:13.91px;font-weight:normal;font-style:normal;font-family:'Liberation Sans',sans-serif;color:#217346;transform:scaleX(1.0429);">2</div>
<div class="t" style="left:13.90px;top:287px;font-size:13.91px;font-weight:normal;font-style:normal;font-family:'Liberation Sans',sans-serif;color:#217346;transform:scaleX(1.0429);">3</div>
<div class="t" style="left:13.90px;top:307px;font-size:13.91px;font-weight:normal;font-style:normal;font-family:'Liberation Sans',sans-serif;color:#217346;transform:scaleX(0.9125);">4</div>
<div class="t" style="left:12.86px;top:327px;font-size:13.91px;font-weight:normal;font-style:normal;font-family:'Liberation Sans',sans-serif;color:#217346;transform:scaleX(1.0429);">5</div>
<div class="t" style="left:13.90px;top:348px;font-size:13.91px;font-weight:normal;font-style:normal;font-family:'Liberation Sans',sans-serif;color:#217346;transform:scaleX(0.9125);">6</div>
<div class="t" style="left:13.90px;top:368px;font-size:13.91px;font-weight:normal;font-style:normal;font-family:'Liberation Sans',sans-serif;color:#217346;transform:scaleX(1.0429);">7</div>
<div class="t" style="left:13.90px;top:389px;font-size:13.91px;font-weight:normal;font-style:normal;font-family:'Liberation Sans',sans-serif;color:#217346;transform:scaleX(1.0429);">8</div>
<div class="t" style="left:13.90px;top:409px;font-size:13.91px;font-weight:normal;font-style:normal;font-family:'Liberation Sans',sans-serif;color:#217346;transform:scaleX(1.0429);">9</div>
<div class="t" style="left:9.93px;top:429px;font-size:13.91px;font-weight:normal;font-style:normal;font-family:'Liberation Sans',sans-serif;color:#217346;transform:scaleX(1.0714);">10</div>
<div class="t" style="left:9.85px;top:450px;font-size:13.91px;font-weight:normal;font-style:normal;font-family:'Liberation Sans',sans-serif;color:#217346;transform:scaleX(1.1538);">11</div>
<div class="t" style="left:9.93px;top:470px;font-size:13.91px;font-weight:normal;font-style:normal;font-family:'Liberation Sans',sans-serif;color:#217346;transform:scaleX(1.0714);">12</div>
<div class="t" style="left:9.93px;top:491px;font-size:13.91px;font-weight:normal;font-style:normal;font-family:'Liberation Sans',sans-serif;color:#333;transform:scaleX(1.0714);">13</div>
<div class="t" style="left:9.93px;top:511px;font-size:13.91px;font-weight:normal;font-style:normal;font-family:'Liberation Sans',sans-serif;color:#333;transform:scaleX(1.0714);">14</div>
<div class="t" style="left:152.86px;top:247px;font-size:13.91px;font-weight:bold;font-style:normal;font-family:'Liberation Sans',sans-serif;color:#111;transform:scaleX(0.9391);">Federal Holidays</div>
<div class="t" style="left:34.91px;top:286px;font-size:14.06px;font-weight:normal;font-style:normal;font-family:'Liberation Sans',sans-serif;color:#111;transform:scaleX(0.9908);">Birthday of Martin Luther King, Jr.</div>
<div class="t" style="left:34.94px;top:266px;font-size:14.06px;font-weight:normal;font-style:normal;font-family:'Liberation Sans',sans-serif;color:#111;transform:scaleX(0.9636);">New Year’s Day</div>
<div class="t" style="left:35.90px;top:307px;font-size:14.06px;font-weight:normal;font-style:normal;font-family:'Liberation Sans',sans-serif;color:#111;transform:scaleX(0.9899);">Washington’s Birthday</div>
<div class="t" style="left:34.89px;top:327px;font-size:14.06px;font-weight:normal;font-style:normal;font-family:'Liberation Sans',sans-serif;color:#111;transform:scaleX(1.0058);">Memorial Day</div>
<div class="t" style="left:35.90px;top:347px;font-size:14.06px;font-weight:normal;font-style:normal;font-family:'Liberation Sans',sans-serif;color:#111;transform:scaleX(0.9751);">Juneteenth &amp; Independence Day</div>
<div class="t" style="left:34.93px;top:368px;font-size:14.06px;font-weight:normal;font-style:normal;font-family:'Liberation Sans',sans-serif;color:#111;transform:scaleX(0.9684);">Independence Day</div>
<div class="t" style="left:34.93px;top:388px;font-size:14.06px;font-weight:normal;font-style:normal;font-family:'Liberation Sans',sans-serif;color:#111;transform:scaleX(0.9656);">Labor Day</div>
<div class="t" style="left:35.90px;top:409px;font-size:14.06px;font-weight:normal;font-style:normal;font-family:'Liberation Sans',sans-serif;color:#111;transform:scaleX(0.9511);">Columbus Day</div>
<div class="t" style="left:35.90px;top:429px;font-size:14.06px;font-weight:normal;font-style:normal;font-family:'Liberation Sans',sans-serif;color:#111;transform:scaleX(0.9702);">Veterans Day</div>
<div class="t" style="left:35.90px;top:449px;font-size:14.06px;font-weight:normal;font-style:normal;font-family:'Liberation Sans',sans-serif;color:#111;transform:scaleX(0.9286);">Thanksgiving Day</div>
<div class="t" style="left:35.90px;top:470px;font-size:14.06px;font-weight:normal;font-style:normal;font-family:'Liberation Sans',sans-serif;color:#111;transform:scaleX(0.9522);">Christmas Day</div>
<div class="t" style="left:316.73px;top:266px;font-size:14.06px;font-weight:normal;font-style:normal;font-family:'Liberation Sans',sans-serif;color:#111;transform:scaleX(1.0660);">1/2/2023</div>
<div class="t" style="left:308.95px;top:286px;font-size:14.06px;font-weight:normal;font-style:normal;font-family:'Liberation Sans',sans-serif;color:#111;transform:scaleX(1.0541);">1/16/2023</div>
<div class="t" style="left:309.10px;top:307px;font-size:14.06px;font-weight:normal;font-style:normal;font-family:'Liberation Sans',sans-serif;color:#111;transform:scaleX(1.0516);">2/20/2023</div>
<div class="t" style="left:308.03px;top:327px;font-size:14.06px;font-weight:normal;font-style:normal;font-family:'Liberation Sans',sans-serif;color:#111;transform:scaleX(1.0689);">5/29/2023</div>
<div class="t" style="left:309.10px;top:347px;font-size:14.06px;font-weight:normal;font-style:normal;font-family:'Liberation Sans',sans-serif;color:#111;transform:scaleX(1.0516);">6/19/2023</div>
<div class="t" style="left:317.20px;top:368px;font-size:14.06px;font-weight:normal;font-style:normal;font-family:'Liberation Sans',sans-serif;color:#111;transform:scaleX(1.0574);">7/4/2023</div>
<div class="t" style="left:317.20px;top:388px;font-size:14.06px;font-weight:normal;font-style:normal;font-family:'Liberation Sans',sans-serif;color:#111;transform:scaleX(1.0574);">9/4/2023</div>
<div class="t" style="left:308.03px;top:409px;font-size:14.06px;font-weight:normal;font-style:normal;font-family:'Liberation Sans',sans-serif;color:#111;transform:scaleX(1.0689);">10/9/2023</div>
<div class="t" style="left:300.73px;top:429px;font-size:14.06px;font-weight:normal;font-style:normal;font-family:'Liberation Sans',sans-serif;color:#111;transform:scaleX(1.0662);">11/10/2023</div>
<div class="t" style="left:300.73px;top:449px;font-size:14.06px;font-weight:normal;font-style:normal;font-family:'Liberation Sans',sans-serif;color:#111;transform:scaleX(1.0662);">11/23/2023</div>
<div class="t" style="left:300.75px;top:470px;font-size:14.06px;font-weight:normal;font-style:normal;font-family:'Liberation Sans',sans-serif;color:#111;transform:scaleX(1.0507);">12/25/2023</div>
<div style="position:absolute;left:999px;top:222px;width:21.5px;height:305px;background:#f0f0f0;"></div>
<div style="position:absolute;left:1002px;top:223.5px;width:16px;height:15.5px;background:#fff;border:1px solid #b0b0b0;box-sizing:border-box"></div>
<svg style="position:absolute;left:1006px;top:229px;" width="8" height="4" viewBox="0 0 8 4"><path d="M0 4h8l-4-4z" fill="#222"/></svg>
<div style="position:absolute;left:1002px;top:238px;width:16px;height:190.5px;background:#fff;border:1px solid #c0c0c0;box-sizing:border-box"></div>
<div style="position:absolute;left:1002px;top:511px;width:16px;height:15.5px;background:#fff;border:1px solid #b0b0b0;box-sizing:border-box"></div>
<svg style="position:absolute;left:1006px;top:517px;" width="8" height="4" viewBox="0 0 8 4"><path d="M0 0h8l-4 4z" fill="#222"/></svg>
<div style="position:absolute;left:3px;top:527px;width:1017.5px;height:24px;background:#e6e6e6;"></div>
<div style="position:absolute;left:3px;top:526.5px;width:1017.5px;height:1.0px;background:#c8c8c8;"></div>
<svg style="position:absolute;left:26.5px;top:535.5px;" width="6" height="8" viewBox="0 0 6 8"><path d="M6 0v8l-6-4z" fill="#217346"/></svg>
<svg style="position:absolute;left:51.5px;top:535.5px;" width="5" height="8" viewBox="0 0 5 8"><path d="M0 0v8l5-4z" fill="#b8b8b8"/></svg>
<div style="position:absolute;left:73px;top:539.5px;width:2px;height:2.0px;background:#217346;"></div>
<div style="position:absolute;left:78.5px;top:539.5px;width:2.0px;height:2.0px;background:#217346;"></div>
<div style="position:absolute;left:84px;top:539.5px;width:2px;height:2.0px;background:#217346;"></div>
<div style="position:absolute;left:91.4px;top:530px;width:1.0px;height:17px;background:#a8a8a8;"></div>
<div style="position:absolute;left:198.7px;top:530px;width:1.0px;height:17px;background:#a8a8a8;"></div>
<div style="position:absolute;left:282px;top:530px;width:1px;height:17px;background:#a8a8a8;"></div>
<div style="position:absolute;left:371.6px;top:530px;width:1.0px;height:17px;background:#a8a8a8;"></div>
<div class="t" style="left:102.87px;top:529px;font-size:14.06px;font-weight:normal;font-style:normal;font-family:'Liberation Sans',sans-serif;color:#444;transform:scaleX(1.0291);">ScenarioMgr</div>
<div class="t" style="left:210.00px;top:529px;font-size:14.06px;font-weight:normal;font-style:normal;font-family:'Liberation Sans',sans-serif;color:#444;transform:scaleX(0.9629);">GoalSeek</div>
<div class="t" style="left:292.86px;top:529px;font-size:14.06px;font-weight:normal;font-style:normal;font-family:'Liberation Sans',sans-serif;color:#444;transform:scaleX(1.0403);">DataTable</div>
<div class="t" style="left:383.00px;top:529px;font-size:14.06px;font-weight:normal;font-style:normal;font-family:'Liberation Sans',sans-serif;color:#444;transform:scaleX(0.9355);">Time</div>
<div class="t" style="left:640.00px;top:529px;font-size:14.06px;font-weight:normal;font-style:normal;font-family:'Liberation Sans',sans-serif;color:#444;transform:scaleX(1.1622);">zation</div>
<div style="position:absolute;left:698px;top:526.5px;width:60px;height:21.5px;background:#fff;border:1px solid #b8b8b8;border-bottom:none;box-sizing:border-box"></div>
<div style="position:absolute;left:698px;top:546px;width:59px;height:2px;background:#217346;"></div>
<div class="t" style="left:708.39px;top:529px;font-size:14.06px;font-weight:bold;font-style:normal;font-family:'Liberation Sans',sans-serif;color:#217346;transform:scaleX(1.0135);">Dates</div>
<svg style="position:absolute;left:784px;top:531px;" width="18" height="18" viewBox="0 0 18 18"><circle cx="9" cy="9" r="8.2" fill="none" stroke="#8a8a8a" stroke-width="1.2"/><path d="M9 4.5v9 M4.5 9h9" stroke="#8a8a8a" stroke-width="1.2"/></svg>
<div style="position:absolute;left:854px;top:532px;width:2px;height:2px;background:#b0b0b0;"></div>
<div style="position:absolute;left:854px;top:537.5px;width:2px;height:2.0px;background:#b0b0b0;"></div>
<div style="position:absolute;left:854px;top:543px;width:2px;height:2px;background:#b0b0b0;"></div>
<div style="position:absolute;left:869.5px;top:531px;width:130.0px;height:15.5px;background:#fff;border:1px solid #b0b0b0;box-sizing:border-box"></div>
<div style="position:absolute;left:883.5px;top:531px;width:1.0px;height:15.5px;background:#b0b0b0;"></div>
<div style="position:absolute;left:975px;top:531px;width:9px;height:15.5px;background:#f0f0f0;"></div>
<div style="position:absolute;left:974.5px;top:531px;width:1.0px;height:15.5px;background:#b0b0b0;"></div>
<div style="position:absolute;left:983.5px;top:531px;width:1.0px;height:15.5px;background:#b0b0b0;"></div>
<svg style="position:absolute;left:874px;top:535px;" width="5" height="8" viewBox="0 0 5 8"><path d="M5 0v8l-5-4z" fill="#222"/></svg>
<svg style="position:absolute;left:989.5px;top:535px;" width="5" height="8" viewBox="0 0 5 8"><path d="M0 0v8l5-4z" fill="#222"/></svg>
<div style="position:absolute;left:3px;top:551px;width:1017.5px;height:22.799999999999955px;background:#f3f2f1;"></div>
<div style="position:absolute;left:3px;top:550.5px;width:1017.5px;height:1.0px;background:#c8c8c8;"></div>
<div class="t" style="left:10.50px;top:559px;font-size:11.88px;font-weight:normal;font-style:normal;font-family:'Liberation Sans',sans-serif;color:#555;transform:scaleX(0.9000);">Ready</div>
<svg style="position:absolute;left:63px;top:556px;" width="16" height="15" viewBox="0 0 16 15"><path d="M0.6 0.6h14v3 M0.6 0.6v13.5h6 M0.6 3.5h14 M3 6.5h4 M3 9h3 M3 11.5h3" fill="none" stroke="#555" stroke-width="1.1"/><circle cx="11.5" cy="10.5" r="3.8" fill="none" stroke="#555" stroke-width="1.1"/><circle cx="11.5" cy="10.5" r="1.8" fill="#555"/></svg>
<div class="t" style="left:639.00px;top:559px;font-size:11.88px;font-weight:normal;font-style:normal;font-family:'Liberation Sans',sans-serif;color:#555;transform:scaleX(0.9571);">ettings</div>
<div style="position:absolute;left:693px;top:551px;width:42.5px;height:22px;background:#d2d2d2;"></div>
<svg style="position:absolute;left:706.5px;top:555.5px;" width="14" height="15" viewBox="0 0 14 15"><path d="M0.6 0.6h12.8v13.8h-12.8z M0.6 5.2h12.8 M0.6 9.8h12.8 M4.8 0.6v13.8 M9.2 0.6v13.8" fill="none" stroke="#444" stroke-width="1.2"/></svg>
<svg style="position:absolute;left:749.5px;top:555.5px;" width="15" height="15" viewBox="0 0 15 15"><path d="M0.6 0.6h13.8v13.8h-13.8z" fill="none" stroke="#444" stroke-width="1.2"/><path d="M3.5 3.5h8v8h-8z" fill="none" stroke="#444" stroke-width="1"/><path d="M5.5 5.5h4 M5.5 7.5h4 M5.5 9.5h4" stroke="#444" stroke-width="0.9"/></svg>
<svg style="position:absolute;left:792px;top:555.5px;" width="15" height="15" viewBox="0 0 15 15"><path d="M0.6 0.6h13.8v13.8h-13.8z M5 0.6v8 M9 0.6v8 M0.6 8.6h8.4" fill="none" stroke="#444" stroke-width="1.2"/></svg>
<div style="position:absolute;left:826.7px;top:562.5px;width:7.5px;height:1.2000000000000455px;background:#555;"></div>
<div style="position:absolute;left:840.6px;top:562.5px;width:105.0px;height:1.0px;background:#666;"></div>
<div style="position:absolute;left:891.2px;top:556.7px;width:4.5px;height:12.0px;background:#444;"></div>
<div style="position:absolute;left:950.5px;top:562.5px;width:8.200000000000045px;height:1.2000000000000455px;background:#555;"></div>
<div style="position:absolute;left:954px;top:558.5px;width:1.2000000000000455px;height:9.200000000000045px;background:#555;"></div>
<div class="t" style="left:972.10px;top:559px;font-size:11.88px;font-weight:normal;font-style:normal;font-family:'Liberation Sans',sans-serif;color:#666;transform:scaleX(0.9034);">100%</div>
<div style="position:absolute;left:414px;top:103px;width:229px;height:512px;background:#fff;border:1px solid #a6a6a6;border-bottom:none;box-sizing:border-box;box-shadow:0 2px 5px rgba(0,0,0,0.16)"></div>
<div style="position:absolute;left:624px;top:106px;width:17px;height:506px;background:#f0f0f0;"></div>
<div style="position:absolute;left:624.4px;top:106.3px;width:15.899999999999977px;height:16.0px;background:#e3e3e3;border:1px solid #b5b5b5;box-sizing:border-box"></div>
<svg style="position:absolute;left:628.5px;top:111px;" width="8" height="4.5" viewBox="0 0 8 4.5"><path d="M0 4.5h8l-4-4.5z" fill="#1a1a1a"/></svg>
<div style="position:absolute;left:624.4px;top:121.5px;width:15.899999999999977px;height:430.9px;background:#dedede;border:1px solid #b5b5b5;box-sizing:border-box"></div>
<div style="position:absolute;left:624.4px;top:596.3px;width:15.899999999999977px;height:15.100000000000023px;background:#e3e3e3;border:1px solid #b5b5b5;box-sizing:border-box"></div>
<svg style="position:absolute;left:628.5px;top:603px;" width="8" height="4.5" viewBox="0 0 8 4.5"><path d="M0 0h8l-4 4.5z" fill="#1a1a1a"/></svg>
<div class="t" style="left:478.50px;top:116px;font-size:12.61px;font-weight:bold;font-style:normal;font-family:'Liberation Sans',sans-serif;color:#4a4a4a;transform:scaleX(0.9617);">General</div>
<div class="t" style="left:477.46px;top:167px;font-size:12.61px;font-weight:bold;font-style:normal;font-family:'Liberation Sans',sans-serif;color:#4a4a4a;transform:scaleX(1.0362);">Number</div>
<div class="t" style="left:478.50px;top:218px;font-size:12.61px;font-weight:bold;font-style:normal;font-family:'Liberation Sans',sans-serif;color:#4a4a4a;transform:scaleX(0.9455);">Currency</div>
<div class="t" style="left:478.50px;top:269px;font-size:12.61px;font-weight:bold;font-style:normal;font-family:'Liberation Sans',sans-serif;color:#4a4a4a;transform:scaleX(0.9754);">Accounting</div>
<div class="t" style="left:478.50px;top:320px;font-size:12.61px;font-weight:bold;font-style:normal;font-family:'Liberation Sans',sans-serif;color:#4a4a4a;transform:scaleX(0.9812);">Short Date</div>
<div class="t" style="left:477.50px;top:371px;font-size:12.61px;font-weight:bold;font-style:normal;font-family:'Liberation Sans',sans-serif;color:#4a4a4a;transform:scaleX(0.9951);">Long Date</div>
<div class="t" style="left:478.50px;top:422px;font-size:12.61px;font-weight:bold;font-style:normal;font-family:'Liberation Sans',sans-serif;color:#4a4a4a;transform:scaleX(1.0034);">Time</div>
<div class="t" style="left:477.52px;top:473px;font-size:12.61px;font-weight:bold;font-style:normal;font-family:'Liberation Sans',sans-serif;color:#4a4a4a;transform:scaleX(0.9761);">Percentage</div>
<div class="t" style="left:477.51px;top:524px;font-size:12.61px;font-weight:bold;font-style:normal;font-family:'Liberation Sans',sans-serif;color:#4a4a4a;transform:scaleX(0.9938);">Fraction</div>
<div class="t" style="left:478.50px;top:575px;font-size:12.61px;font-weight:bold;font-style:normal;font-family:'Liberation Sans',sans-serif;color:#4a4a4a;transform:scaleX(0.9464);">Scientific</div>
<div class="t" style="left:477.47px;top:134px;font-size:12.75px;font-weight:normal;font-style:normal;font-family:'Liberation Sans',sans-serif;color:#6e6e6e;transform:scaleX(1.0307);">No specific format</div>
<div class="t" style="left:478.50px;top:185px;font-size:12.75px;font-weight:normal;font-style:normal;font-family:'Liberation Sans',sans-serif;color:#6e6e6e;transform:scaleX(0.9340);">44928.00</div>
<div class="t" style="left:478.50px;top:236px;font-size:12.75px;font-weight:normal;font-style:normal;font-family:'Liberation Sans',sans-serif;color:#6e6e6e;transform:scaleX(0.9203);">$44,928.00</div>
<div class="t" style="left:482.00px;top:287px;font-size:12.75px;font-weight:normal;font-style:normal;font-family:'Liberation Sans',sans-serif;color:#6e6e6e;transform:scaleX(0.9187);">$44,928.00</div>
<div class="t" style="left:477.46px;top:338px;font-size:12.75px;font-weight:normal;font-style:normal;font-family:'Liberation Sans',sans-serif;color:#6e6e6e;transform:scaleX(1.0417);">1/2/2023</div>
<div class="t" style="left:477.54px;top:389px;font-size:12.75px;font-weight:normal;font-style:normal;font-family:'Liberation Sans',sans-serif;color:#6e6e6e;transform:scaleX(0.9556);">Monday, January 2, 2023</div>
<div class="t" style="left:477.53px;top:440px;font-size:12.75px;font-weight:normal;font-style:normal;font-family:'Liberation Sans',sans-serif;color:#6e6e6e;transform:scaleX(0.9714);">12:00:00 AM</div>
<div class="t" style="left:478.50px;top:491px;font-size:12.75px;font-weight:normal;font-style:normal;font-family:'Liberation Sans',sans-serif;color:#6e6e6e;transform:scaleX(0.9333);">4492800.00%</div>
<div class="t" style="left:478.50px;top:542px;font-size:12.75px;font-weight:normal;font-style:normal;font-family:'Liberation Sans',sans-serif;color:#6e6e6e;transform:scaleX(0.9571);">44928</div>
<div class="t" style="left:478.50px;top:593px;font-size:12.75px;font-weight:normal;font-style:normal;font-family:'Liberation Sans',sans-serif;color:#6e6e6e;transform:scaleX(0.9309);">4.49E+04</div>
<svg style="position:absolute;left:430px;top:113px;" width="24" height="20" viewBox="0 0 24 20"><circle cx="11.45" cy="11.4" r="8.8" fill="#f6f6f6"/><path d="M5.8 18.1 A8.8 8.8 0 1 1 19.6 16.6" fill="none" stroke="#3b8edb" stroke-width="1.6"/><path d="M11 6.4v6.2h4.6" fill="none" stroke="#444" stroke-width="1.6"/></svg>
<svg style="position:absolute;left:0px;top:0px;" width="1024" height="653" viewBox="0 0 1024 653"><g fill="none" stroke="#505050" stroke-width="1.4" stroke-linejoin="round"><path d="M0.3 2.6L4.6 0V13.5" transform="translate(435.6,131.1) scale(0.575,1.0)" vector-effect="non-scaling-stroke"/><path d="M0.4 2.8C0.9 1.1 2.3 0.1 4.1 0.1C6.2 0.1 7.6 1.5 7.6 3.4C7.6 5.4 6.3 6.9 4.2 8.8L0.4 12.7V13.4H8" transform="translate(443.6,131.1) scale(1.025,1.0)" vector-effect="non-scaling-stroke"/><path d="M0.6 1C1.4 0.4 2.5 0.1 3.8 0.1C5.9 0.1 7.3 1.4 7.3 3.2C7.3 5.1 5.8 6.4 3.5 6.4H2.4M3.5 6.4C6.1 6.4 7.7 7.8 7.7 9.8C7.7 11.9 6 13.4 3.6 13.4C2.3 13.4 1.1 13 0.2 12.4" transform="translate(453.8,131.1) scale(1.0,1.0)" vector-effect="non-scaling-stroke"/></g></svg>
<svg style="position:absolute;left:0px;top:0px;" width="1024" height="653" viewBox="0 0 1024 653"><g fill="none" stroke="#505050" stroke-width="1.7" stroke-linejoin="round"><path d="M0.3 2.6L4.6 0V13.5" transform="translate(435.4,171.9) scale(0.775,1.377777777777778)" vector-effect="non-scaling-stroke"/><path d="M0.4 2.8C0.9 1.1 2.3 0.1 4.1 0.1C6.2 0.1 7.6 1.5 7.6 3.4C7.6 5.4 6.3 6.9 4.2 8.8L0.4 12.7V13.4H8" transform="translate(446.8,171.6) scale(1.375,1.4)" vector-effect="non-scaling-stroke"/></g></svg>
<svg style="position:absolute;left:431px;top:222px;" width="34" height="28" viewBox="0 0 34 28"><rect x="0.8" y="0.8" width="30" height="18.5" fill="#fff" stroke="#777" stroke-width="1.5"/><path d="M6 5h-2v10h2 M25.5 5h2v10h-2" fill="none" stroke="#555" stroke-width="1.3"/><ellipse cx="15.8" cy="10" rx="4.2" ry="6" fill="none" stroke="#555" stroke-width="1.3"/></svg>
<svg style="position:absolute;left:448.5px;top:232.6px;" width="16" height="17" viewBox="0 0 16 17"><g fill="#fff" stroke="#e8862a" stroke-width="1.3"><path d="M1 3.8v8.6a7 2.8 0 0 0 14 0v-8.6"/><ellipse cx="8" cy="3.8" rx="7" ry="2.8" fill="#f7c77a"/><path d="M1 6.8a7 2.8 0 0 0 14 0 M1 9.6a7 2.8 0 0 0 14 0"/></g></svg>
<svg style="position:absolute;left:435.5px;top:268px;" width="22" height="31" viewBox="0 0 22 31"><rect x="0.8" y="0.8" width="19.5" height="29" fill="#fff" stroke="#777" stroke-width="1.5"/><rect x="4" y="4" width="13" height="5" fill="#ddd" stroke="#777" stroke-width="1.2"/><g fill="#333"><rect x="3.5" y="12.5" width="3" height="3"/><rect x="9" y="12.5" width="3" height="3"/><rect x="14.5" y="12.5" width="3" height="3"/><rect x="3.5" y="18" width="3" height="3"/><rect x="9" y="18" width="3" height="3"/><rect x="3.5" y="23.5" width="3" height="3"/><rect x="9" y="23.5" width="3" height="3"/></g></svg>
<svg style="position:absolute;left:448.5px;top:284px;" width="16" height="17" viewBox="0 0 16 17"><g fill="#fff" stroke="#e8862a" stroke-width="1.3"><path d="M1 3.8v8.6a7 2.8 0 0 0 14 0v-8.6"/><ellipse cx="8" cy="3.8" rx="7" ry="2.8" fill="#f7c77a"/><path d="M1 6.8a7 2.8 0 0 0 14 0 M1 9.6a7 2.8 0 0 0 14 0"/></g></svg>
<svg style="position:absolute;left:431.5px;top:319px;" width="30" height="30" viewBox="0 0 30 30"><rect x="0.8" y="3" width="28.5" height="26.5" fill="#fbfbfb" stroke="#555" stroke-width="1.5"/><path d="M0.8 8h28.5" stroke="#555" stroke-width="1.5"/><path d="M6 0v6 M24 0v6" stroke="#555" stroke-width="1.3"/><rect x="9.5" y="16.5" width="2" height="2" fill="#333"/></svg>
<svg style="position:absolute;left:431.5px;top:370px;" width="30" height="30" viewBox="0 0 30 30"><rect x="0.8" y="3" width="28.5" height="26.5" fill="#fbfbfb" stroke="#555" stroke-width="1.5"/><path d="M0.8 8h28.5" stroke="#555" stroke-width="1.5"/><path d="M6 0v6 M24 0v6" stroke="#555" stroke-width="1.3"/><rect x="9.5" y="16.5" width="2" height="2" fill="#333"/></svg>
<svg style="position:absolute;left:431.5px;top:420px;" width="31" height="31" viewBox="0 0 31 31"><circle cx="15.2" cy="15.2" r="14.2" fill="#fbfbfb" stroke="#555" stroke-width="1.4"/><path d="M14.5 6.5v10h7.5" fill="none" stroke="#555" stroke-width="1.5"/></svg>
<svg style="position:absolute;left:430px;top:470px;" width="34" height="33" viewBox="0 0 34 33"><g fill="none" stroke="#505050" stroke-width="1.4"><ellipse cx="9.3" cy="9.7" rx="4.6" ry="5.1"/><ellipse cx="24.1" cy="23.4" rx="4.7" ry="5.1"/><path d="M24.8 4L8.9 28.6"/></g></svg>
<svg style="position:absolute;left:430px;top:520px;" width="34" height="33" viewBox="0 0 34 33"><g fill="none" stroke="#505050" stroke-width="1.4"><path d="M6 7.5L10 4.4V17.6"/><path d="M24.8 5L9 29.8"/></g></svg>
<svg style="position:absolute;left:0px;top:0px;" width="1024" height="653" viewBox="0 0 1024 653"><g fill="none" stroke="#505050" stroke-width="1.4" stroke-linejoin="round"><path d="M0.4 2.8C0.9 1.1 2.3 0.1 4.1 0.1C6.2 0.1 7.6 1.5 7.6 3.4C7.6 5.4 6.3 6.9 4.2 8.8L0.4 12.7V13.4H8" transform="translate(449.7,537) scale(1.0,0.9481481481481482)" vector-effect="non-scaling-stroke"/></g></svg>
<svg style="position:absolute;left:0px;top:0px;" width="1024" height="653" viewBox="0 0 1024 653"><g fill="none" stroke="#505050" stroke-width="1.5" stroke-linejoin="round"><path d="M0.3 2.6L4.6 0V13.5" transform="translate(431.8,579) scale(0.65,1.377777777777778)" vector-effect="non-scaling-stroke"/><path d="M4 0.1C6.3 0.1 7.7 2.6 7.7 6.75C7.7 10.9 6.3 13.4 4 13.4C1.7 13.4 0.3 10.9 0.3 6.75C0.3 2.6 1.7 0.1 4 0.1Z" transform="translate(442,578.7) scale(1.475,1.414814814814815)" vector-effect="non-scaling-stroke"/></g></svg>
<svg style="position:absolute;left:0px;top:0px;" width="1024" height="653" viewBox="0 0 1024 653"><g fill="none" stroke="#505050" stroke-width="1.2" stroke-linejoin="round"><path d="M0.4 2.8C0.9 1.1 2.3 0.1 4.1 0.1C6.2 0.1 7.6 1.5 7.6 3.4C7.6 5.4 6.3 6.9 4.2 8.8L0.4 12.7V13.4H8" transform="translate(455.4,573.8) scale(0.775,0.7407407407407407)" vector-effect="non-scaling-stroke"/></g></svg>
<div style="position:absolute;left:414px;top:615px;width:229px;height:33px;background:#d6d6d6;border:3px solid #f05545;box-sizing:border-box"></div>
<div class="t" style="left:452.92px;top:624px;font-size:14.20px;font-weight:normal;font-style:normal;font-family:'Liberation Sans',sans-serif;color:#333;transform:scaleX(0.8784);">More Number Formats...</div>
<div style="position:absolute;left:454px;top:638px;width:9px;height:1px;background:#333;"></div>
</body></html>
